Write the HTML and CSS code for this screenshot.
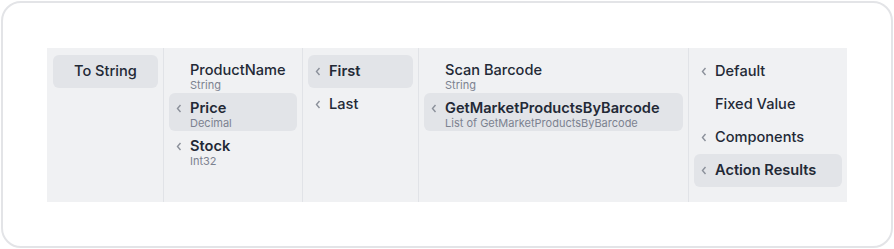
FILE: index.html
```html
<html>
    <head>
        <title>Mapping picker</title>
        <link rel="stylesheet" href="styles.css">
    </head>
    <body>
        <div class="card">
            <div class="picker">
                <div class="column col-1">
                    <div class="item selected"><span class="label">To String</span></div>
                </div>
                <div class="column col-2">
                    <div class="item double">
                        <span class="label">ProductName</span>
                        <span class="sub">String</span>
                    </div>
                    <div class="item double selected">
                        <svg class="chevron" width="6" height="9" viewBox="0 0 6 9"><polyline points="4.5,1 1.5,4.5 4.5,8"/></svg>
                        <span class="label strong">Price</span>
                        <span class="sub">Decimal</span>
                    </div>
                    <div class="item double">
                        <svg class="chevron" width="6" height="9" viewBox="0 0 6 9"><polyline points="4.5,1 1.5,4.5 4.5,8"/></svg>
                        <span class="label strong">Stock</span>
                        <span class="sub">Int32</span>
                    </div>
                </div>
                <div class="column col-3">
                    <div class="item selected">
                        <svg class="chevron" width="6" height="9" viewBox="0 0 6 9"><polyline points="4.5,1 1.5,4.5 4.5,8"/></svg>
                        <span class="label strong">First</span>
                    </div>
                    <div class="item">
                        <svg class="chevron" width="6" height="9" viewBox="0 0 6 9"><polyline points="4.5,1 1.5,4.5 4.5,8"/></svg>
                        <span class="label">Last</span>
                    </div>
                </div>
                <div class="column col-4">
                    <div class="item double">
                        <span class="label">Scan Barcode</span>
                        <span class="sub">String</span>
                    </div>
                    <div class="item double selected">
                        <svg class="chevron" width="6" height="9" viewBox="0 0 6 9"><polyline points="4.5,1 1.5,4.5 4.5,8"/></svg>
                        <span class="label strong">GetMarketProductsByBarcode</span>
                        <span class="sub">List of GetMarketProductsByBarcode</span>
                    </div>
                </div>
                <div class="column col-5">
                    <div class="item">
                        <svg class="chevron" width="6" height="9" viewBox="0 0 6 9"><polyline points="4.5,1 1.5,4.5 4.5,8"/></svg>
                        <span class="label">Default</span>
                    </div>
                    <div class="item">
                        <span class="label">Fixed Value</span>
                    </div>
                    <div class="item">
                        <svg class="chevron" width="6" height="9" viewBox="0 0 6 9"><polyline points="4.5,1 1.5,4.5 4.5,8"/></svg>
                        <span class="label">Components</span>
                    </div>
                    <div class="item selected">
                        <svg class="chevron" width="6" height="9" viewBox="0 0 6 9"><polyline points="4.5,1 1.5,4.5 4.5,8"/></svg>
                        <span class="label strong">Action Results</span>
                    </div>
                </div>
            </div>
        </div>
    </body>
</html>
```

FILE: styles.css
```css
body
{
    margin: 0;
    padding: 1px;
    background-color: #FFFFFF;

    font-family: Inter, "Noto Sans", sans-serif;
}

.card
{
    box-sizing: border-box;
    height: 247px;
    padding: 45px 44px;
    border: 2px solid #E3E4E7;
    border-radius: 20px;
}

.picker
{
    display: grid;
    grid-template-columns: 117px 139px 116px 270px 158px;
    height: 154px;

    background-color: #F0F1F3;
}

.column
{
    box-sizing: border-box;
    padding: 7px 5px;
    border-right: 1px solid #E1E3E7;
}

.col-1
{
    padding-left: 6px;
    padding-right: 5px;
}

.col-5
{
    border-right: none;
}

.item
{
    position: relative;
    display: flex;
    flex-direction: column;
    height: 33px;
    box-sizing: border-box;
    padding: 7px 8px 0 21px;
    border-radius: 6px;
}

.item.double
{
    height: 38px;
    padding-top: 6px;
}

.item.selected
{
    background-color: #E2E4E8;
}

.chevron
{
    position: absolute;
    left: 7px;
    top: 12px;

    fill: none;
    stroke: #8B909A;
    stroke-width: 1.4;
}

.double .chevron
{
    top: 11px;
}

.label
{
    font-size: 14.6px;
    line-height: 18px;
    font-weight: 500;
    color: #232936;
    white-space: nowrap;
}

.label.strong
{
    font-weight: 600;
}

.sub
{
    font-size: 11px;
    line-height: 12px;
    color: #7C8290;
    white-space: nowrap;
}
```
